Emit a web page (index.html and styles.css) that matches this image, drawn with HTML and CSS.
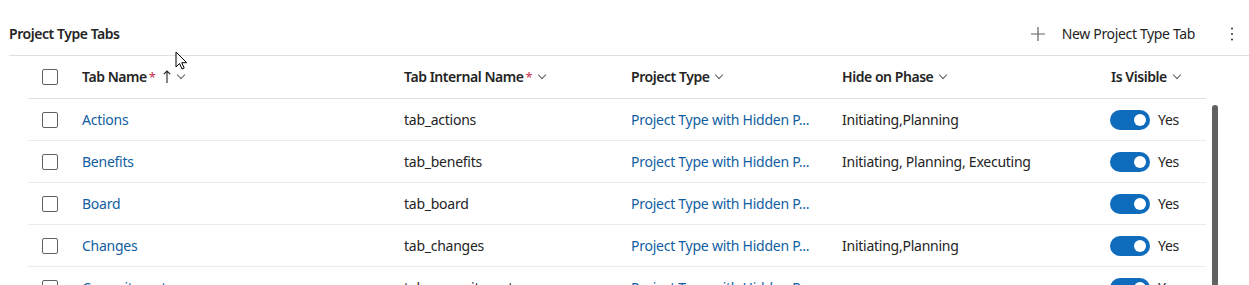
FILE: index.html
```html
<!DOCTYPE html>
<html lang="en">
<head>
    <meta charset="UTF-8">
    <title>Project Type Tabs</title>
    <link rel="stylesheet" href="styles.css">
</head>
<body>
    <div class="panel">
        <div class="toolbar">
            <h2 class="title">Project Type Tabs</h2>
            <button type="button" class="btn_new">
                <svg width="14" height="14" viewBox="0 0 14 14"><path d="M7 0v14M0 7h14" stroke="#616161" stroke-width="1.2" fill="none"/></svg>
                <span>New Project Type Tab</span>
            </button>
            <button type="button" class="btn_more">
                <svg width="4" height="14" viewBox="0 0 4 14"><circle cx="2" cy="1.5" r="1.1" fill="#424242"/><circle cx="2" cy="7" r="1.1" fill="#424242"/><circle cx="2" cy="12.5" r="1.1" fill="#424242"/></svg>
            </button>
        </div>

        <div class="list_wrap">
            <div class="grid">
                <div class="row head">
                    <div class="cell chk"><span class="box"></span></div>
                    <div class="cell">Tab Name<span class="req">*</span>
                        <svg class="sort" width="8" height="13" viewBox="0 0 8 13"><path d="M4 1v12M0.8 4.2L4 1l3.2 3.2" stroke="#242424" stroke-width="1.1" fill="none"/></svg>
                        <span class="chev"></span></div>
                    <div class="cell">Tab Internal Name<span class="req">*</span><span class="chev"></span></div>
                    <div class="cell">Project Type<span class="chev"></span></div>
                    <div class="cell">Hide on Phase<span class="chev"></span></div>
                    <div class="cell">Is Visible<span class="chev"></span></div>
                </div>

                <div class="row">
                    <div class="cell chk"><span class="box"></span></div>
                    <div class="cell"><a href="#">Actions</a></div>
                    <div class="cell">tab_actions</div>
                    <div class="cell"><a href="#">Project Type with Hidden P...</a></div>
                    <div class="cell">Initiating,Planning</div>
                    <div class="cell"><span class="toggle"></span>Yes</div>
                </div>
                <div class="row">
                    <div class="cell chk"><span class="box"></span></div>
                    <div class="cell"><a href="#">Benefits</a></div>
                    <div class="cell">tab_benefits</div>
                    <div class="cell"><a href="#">Project Type with Hidden P...</a></div>
                    <div class="cell">Initiating, Planning, Executing</div>
                    <div class="cell"><span class="toggle"></span>Yes</div>
                </div>
                <div class="row">
                    <div class="cell chk"><span class="box"></span></div>
                    <div class="cell"><a href="#">Board</a></div>
                    <div class="cell">tab_board</div>
                    <div class="cell"><a href="#">Project Type with Hidden P...</a></div>
                    <div class="cell"></div>
                    <div class="cell"><span class="toggle"></span>Yes</div>
                </div>
                <div class="row">
                    <div class="cell chk"><span class="box"></span></div>
                    <div class="cell"><a href="#">Changes</a></div>
                    <div class="cell">tab_changes</div>
                    <div class="cell"><a href="#">Project Type with Hidden P...</a></div>
                    <div class="cell">Initiating,Planning</div>
                    <div class="cell"><span class="toggle"></span>Yes</div>
                </div>
                <div class="row">
                    <div class="cell chk"><span class="box"></span></div>
                    <div class="cell"><a href="#">Commitments</a></div>
                    <div class="cell">tab_commitments</div>
                    <div class="cell"><a href="#">Project Type with Hidden P...</a></div>
                    <div class="cell"></div>
                    <div class="cell"><span class="toggle"></span>Yes</div>
                </div>
            </div>
            <div class="scrollbar"></div>
        </div>

        <svg class="cursor" width="14" height="20" viewBox="0 0 14 20"><path d="M1 1v15l3.5-3.5 2.5 5.5 2.2-1-2.5-5.3h5z" fill="#fff" stroke="#000" stroke-width="1" stroke-linejoin="round"/></svg>
    </div>
</body>
</html>
```

FILE: styles.css
```css
*{padding:0;margin:0;box-sizing:border-box;}
body{font-family:"Noto Sans","Open Sans",sans-serif;font-size:14px;color:#242424;background:#fff;overflow:hidden;}

.panel{position:relative;padding-left:9px;}

.toolbar{display:flex;align-items:center;height:56px;padding-top:12px;border-bottom:1px solid #e0e0e0;}
.title{flex:1;font-size:14px;font-weight:600;letter-spacing:-0.45px;}
.btn_new{display:flex;align-items:center;gap:17px;background:none;border:none;font:inherit;color:#242424;font-size:14px;letter-spacing:-0.35px;margin-right:27px;margin-left:5px;}
.btn_more{background:none;border:none;width:20px;margin-right:7px;display:flex;justify-content:center;}

.list_wrap{display:flex;align-items:flex-start;padding-left:19px;}
.grid{width:1178px;}
.row{display:grid;grid-template-columns:42px 322px 227px 211px 269px 107px;height:42px;border-bottom:1px solid #ebebeb;}
.row.head{height:43px;padding-bottom:1px;border-bottom-color:#e0e0e0;font-weight:600;}
.row.head .cell{letter-spacing:-0.45px;}
.cell{display:flex;align-items:center;padding-left:12px;white-space:nowrap;overflow:hidden;letter-spacing:-0.25px;}
.cell.chk{padding-left:14px;}
.cell a{color:#115ea3;text-decoration:none;}

.box{width:16px;height:16px;border:1px solid #616161;border-radius:2px;}
.req{color:#c4314b;font-weight:400;margin-left:2px;font-size:13px;}
.sort{margin-left:8px;margin-top:-1px;}
.chev{width:6px;height:6px;border-right:1px solid #616161;border-bottom:1px solid #616161;transform:rotate(45deg);margin:-4px 0 0 7px;}

.toggle{position:relative;width:40px;height:20px;border-radius:10px;background:#0f6cbd;margin-right:8px;margin-left:-1px;}
.toggle::after{content:"";position:absolute;right:4px;top:4px;width:12px;height:12px;border-radius:50%;background:#fff;}

.scrollbar{width:6px;height:190px;margin:49px 0 0 6px;background:#616161;border-radius:3px;}

.cursor{position:absolute;left:175px;top:51px;}
```
